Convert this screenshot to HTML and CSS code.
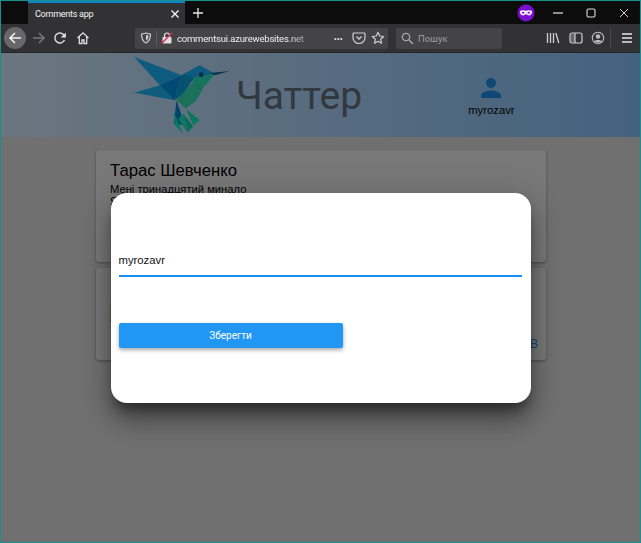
FILE: index.html
```html
<!DOCTYPE html>
<html lang="uk">
<head>
<meta charset="utf-8">
<title>Comments app</title>
<link rel="stylesheet" href="styles.css">
</head>
<body>
<div class="window">
  <div class="tabstrip">
    <div class="tab">
      <span class="tab-title">Comments app</span>
      <svg class="tab-close" width="10" height="10" viewBox="0 0 10 10"><path d="M1.500 1.500l7 7M8.500 1.500l-7 7" stroke="#f2f2f2" stroke-width="1.400" fill="none"/></svg>
    </div>
    <svg class="newtab" width="12" height="12" viewBox="0 0 12 12"><path d="M6 1v10M1 6h10" stroke="#e6e6e6" stroke-width="1.300" fill="none"/></svg>
    <div class="strip-fill"></div>
    <svg class="mask" width="18" height="18" viewBox="0 0 18 18"><circle cx="9" cy="9" r="8.500" fill="#7a0fd0"/><path d="M3 7c1.700-1 4.100-1 6-.2 1.900-.8 4.300-.8 6 .2.300 2.300-.7 4.500-2.800 4.500-1.400 0-2-1.300-3.200-1.300s-1.800 1.300-3.200 1.300C3.700 11.500 2.700 9.300 3 7z" fill="#f6efff"/><ellipse cx="6.200" cy="8.700" rx="1.300" ry=".9" fill="#7a0fd0"/><ellipse cx="11.800" cy="8.700" rx="1.300" ry=".9" fill="#7a0fd0"/></svg>
    <div class="winbtn"><svg width="10" height="10" viewBox="0 0 10 10"><path d="M0 5h10" stroke="#e8e8e8" stroke-width="1.200"/></svg></div>
    <div class="winbtn"><svg width="10" height="10" viewBox="0 0 10 10"><rect x="1" y="1" width="8" height="8" rx="1.500" stroke="#e0e0e0" stroke-width="1.100" fill="none"/></svg></div>
    <div class="winbtn"><svg width="10" height="10" viewBox="0 0 10 10"><path d="M1 1l8 8M9 1l-8 8" stroke="#d0d0d0" stroke-width="1" fill="none"/></svg></div>
  </div>

  <div class="toolbar">
    <div class="back"><svg width="14" height="14" viewBox="0 0 14 14"><path d="M13 7H2M7 2L2 7l5 5" stroke="#f0f0f0" stroke-width="1.600" fill="none"/></svg></div>
    <svg class="forward" width="14" height="14" viewBox="0 0 14 14"><path d="M1 7h11M7 2l5 5-5 5" stroke="#77777a" stroke-width="1.500" fill="none"/></svg>
    <svg class="reload" width="14" height="14" viewBox="0 0 14 14"><path d="M11.500 9a5 5 0 1 1-.6-5L12.500 6" stroke="#e0e0e0" stroke-width="1.400" fill="none"/><path d="M12.800 1.500v5h-5z" fill="#e0e0e0"/></svg>
    <svg class="home" width="14" height="14" viewBox="0 0 14 14"><path d="M1.500 7L7 1.800 12.500 7M3.300 6v6.500h2.700V9h2v3.500h2.700V6" stroke="#e0e0e0" stroke-width="1.300" fill="none"/></svg>
    <div class="urlbar">
      <svg class="shield" width="12" height="12" viewBox="0 0 12 12"><path d="M6 1l4.500 1.200c0 4-1 7-4.500 8.800C2.500 9.200 1.500 6.200 1.500 2.200z" stroke="#cfcfcf" stroke-width="1.200" fill="none"/><path d="M6 3l2.500.6c0 2.500-.6 4-2.500 5.200z" fill="#cfcfcf"/></svg>
      <span class="url-sep"></span>
      <svg class="lock" width="12" height="12" viewBox="0 0 12 12"><rect x="1.500" y="5" width="9" height="6.500" rx="1" fill="#e0e0e0"/><path d="M3.500 5V3.500a2.500 2.500 0 0 1 5 0V5" stroke="#e0e0e0" stroke-width="1.200" fill="none"/><path d="M.5 11.500L11 1" stroke="#e22850" stroke-width="1.400"/></svg>
      <span class="url-text">commentsui.azurewebsites.net</span>
      <span class="url-more">•••</span>
      <svg class="pocket" width="14" height="14" viewBox="0 0 14 14"><path d="M1.800 2h10.400a.8.8 0 0 1 .8.800V6.500a6 6 0 0 1-12 0V2.800a.8.8 0 0 1 .8-.8z" stroke="#cfcfcf" stroke-width="1.200" fill="none"/><path d="M4.500 5.500L7 8l2.500-2.500" stroke="#cfcfcf" stroke-width="1.300" fill="none"/></svg>
      <svg class="star" width="14" height="14" viewBox="0 0 14 14"><path d="M7 1.300l1.700 3.700 4 .5-3 2.700.8 4L7 10.200l-3.500 2 .8-4-3-2.700 4-.5z" stroke="#cfcfcf" stroke-width="1.200" fill="none" stroke-linejoin="round"/></svg>
    </div>
    <div class="searchbar">
      <svg width="13" height="13" viewBox="0 0 13 13"><circle cx="5" cy="5" r="3.700" stroke="#a8a8aa" stroke-width="1.300" fill="none"/><path d="M8 8l4 4" stroke="#a8a8aa" stroke-width="1.500"/></svg>
      <span class="search-text">Пошук</span>
    </div>
    <div class="tool-fill"></div>
    <svg class="library" width="14" height="14" viewBox="0 0 14 14"><path d="M1.500 2v10M4.500 2v10M7.500 2v10M9.800 2l3 10" stroke="#cfcfcf" stroke-width="1.300" fill="none"/></svg>
    <svg class="sidebar" width="14" height="14" viewBox="0 0 14 14"><rect x="1" y="2" width="12" height="10" rx="2" stroke="#cfcfcf" stroke-width="1.200" fill="none"/><path d="M6 2v10" stroke="#cfcfcf" stroke-width="1.200"/><rect x="2" y="3" width="4" height="8" fill="#cfcfcf" fill-opacity=".35"/></svg>
    <svg class="account" width="14" height="14" viewBox="0 0 14 14"><circle cx="7" cy="7" r="5.700" stroke="#bdbdbd" stroke-width="1.100" fill="none"/><circle cx="7" cy="5.500" r="2.200" fill="#bdbdbd"/><path d="M3 10.500c1-2 7-2 8 0-1.500 1.500-6.500 1.500-8 0z" fill="#bdbdbd"/></svg>
    <span class="tool-sep"></span>
    <svg class="menu" width="12" height="12" viewBox="0 0 12 12"><path d="M1 2h10M1 6h10M1 10h10" stroke="#e6e6e6" stroke-width="1.500"/></svg>
  </div>

  <div class="page">
    <header class="site-header">
      <svg class="logo" width="97" height="80" viewBox="43 20 290 240">
        <polygon points="43,20 185,75 120,105" fill="#1ab8ff"/>
        <polygon points="43,127 120,105 165,150" fill="#1fb8f8"/>
        <polygon points="120,105 185,75 165,150" fill="#0094e8"/>
        <polygon points="185,75 240,45 225,80 190,130 165,150" fill="#0ca0e0"/>
        <polygon points="240,45 285,70 222,82 190,72" fill="#1ab8ff"/>
        <polygon points="222,82 285,70 258,105 215,105" fill="#2ce8bc"/>
        <polygon points="215,100 255,105 230,150 198,175 170,150" fill="#38e0b4"/>
        <polygon points="170,150 195,225 162,220" fill="#0088d8"/>
        <polygon points="162,185 190,250 165,225" fill="#18f0c4"/>
        <polygon points="175,205 205,250 190,190" fill="#18f0c4"/>
        <polygon points="198,175 240,210 220,225" fill="#18f0c4"/>
        <polygon points="190,190 220,228 205,245" fill="#14d4ac"/>
        <polygon points="270,68 330,62 285,75" fill="#0f6898"/>
        <circle cx="244" cy="73" r="7" fill="#0a5c8c"/>
      </svg>
      <h1 class="brand">Чаттер</h1>
      <div class="user">
        <svg width="24" height="24" viewBox="0 0 24 24"><path d="M12 12a5 5 0 1 0 0-10 5 5 0 0 0 0 10zm0 2.500c-3.300 0-10 1.700-10 5V22h20v-2.500c0-3.300-6.700-5-10-5z" fill="#1f90ee"/></svg>
        <span class="user-name">myrozavr</span>
      </div>
    </header>
    <main class="feed">
      <article class="card card-first">
        <h2 class="card-title">Тарас Шевченко</h2>
        <p class="card-text">Мені тринадцятий минало<br>Я пас ягнята за селом</p>
      </article>
      <article class="card card-second">
        <span class="card-mark"></span>
        <a class="card-link">Коментарів</a>
      </article>
    </main>
    <div class="overlay">
      <form class="modal">
        <div class="field">myrozavr</div>
        <button class="save" type="button">Зберегти</button>
      </form>
    </div>
  </div>
</div>
</body>
</html>
```

FILE: styles.css
```css
* { box-sizing: border-box; }
html, body { margin: 0; height: 100%; }
body { font-family: "Liberation Sans", Arial, sans-serif; overflow: hidden; }

.window {
  width: 641px;
  height: 543px;
  border: 1px solid #17908f;
  display: flex;
  flex-direction: column;
  background: #0c0c0d;
}

.tabstrip {
  height: 23px;
  display: flex;
  align-items: center;
  background: #0c0c0d;
  flex: none;
}
.tab {
  margin-left: 27px;
  width: 157px;
  height: 23px;
  background: #323234;
  border-top: 2px solid #0a84c4;
  display: flex;
  align-items: center;
  padding: 0 5px 0 7px;
  justify-content: space-between;
}
.tab-title { font: 9px Roboto, sans-serif; letter-spacing: -.25px; color: #f2f2f2; }
.newtab { margin-left: 7px; }
.strip-fill { flex: 1; }
.mask { margin-right: 6px; }
.winbtn { width: 33px; display: flex; justify-content: center; }

.toolbar {
  height: 29px;
  background: #323234;
  border-bottom: 1px solid #262628;
  display: flex;
  align-items: center;
  flex: none;
  padding-left: 3px;
}
.back {
  width: 22px;
  height: 22px;
  border-radius: 50%;
  background: #68686b;
  display: flex;
  align-items: center;
  justify-content: center;
}
.forward { margin-left: 6px; }
.reload { margin-left: 7px; }
.home { margin-left: 9px; }
.urlbar {
  margin-left: 45px;
  width: 253px;
  height: 21px;
  background: #444447;
  border-radius: 2px;
  display: flex;
  align-items: center;
  padding: 0 3px 0 5px;
}
.url-sep { width: 1px; height: 15px; background: #5c5c5f; margin: 0 4px 0 4px; }
.url-text {
  margin-left: 4px;
  width: 130px;
  font: 9.500px Roboto, sans-serif;
  letter-spacing: -.2px;
  color: #f0f0f0;
  white-space: nowrap;
  overflow: hidden;
  -webkit-mask-image: linear-gradient(90deg, #000 85%, rgba(0,0,0,.35) 100%);
  mask-image: linear-gradient(90deg, #000 85%, rgba(0,0,0,.35) 100%);
}
.url-more { margin-left: 27px; font-size: 7px; letter-spacing: .5px; color: #dedede; }
.pocket { margin-left: 9px; }
.star { margin-left: 5px; }
.searchbar {
  margin-left: 8px;
  width: 106px;
  height: 21px;
  background: #444447;
  border-radius: 2px;
  display: flex;
  align-items: center;
  padding-left: 5px;
}
.search-text { margin-left: 4px; font: 9.500px Roboto, sans-serif; color: #9c9c9e; }
.tool-fill { flex: 1; }
.sidebar { margin-left: 9px; }
.account { margin-left: 8px; }
.tool-sep { width: 1px; height: 20px; background: #4a4a4d; margin-left: 5px; }
.menu { margin: 0 7px 0 10px; }

.page {
  position: relative;
  flex: 1;
  min-height: 0;
  background: #e0e0e0;
  overflow: hidden;
}

.site-header {
  height: 84px;
  background: linear-gradient(90deg, #d6ecff 0%, #88c4fe 100%);
  display: flex;
  align-items: flex-start;
  padding-left: 133px;
}
.logo { margin-top: 4px; }
.brand {
  margin: 18px 0 0 5px;
  font: 400 39px/50px Roboto, sans-serif;
  color: #66707e;
}
.user {
  margin: 23px 0 0 106px;
  display: flex;
  flex-direction: column;
  align-items: center;
  font-size: 11.300px;
  color: #000;
}
.user-name { margin-top: 4px; }

.feed {
  padding: 13px 94px 0 95px;
  display: flex;
  flex-direction: column;
  gap: 6px;
}
.card {
  background: #f0f0f0;
  border-radius: 3px;
  box-shadow: 0 1px 3px rgba(0,0,0,.35);
  padding: 11px 8px 0 14px;
  display: flex;
  flex-direction: column;
}
.card-first { height: 112px; }
.card-second { height: 92px; align-items: flex-start; }
.card-title { margin: 0; font: 400 16.700px/20px "Liberation Sans", sans-serif; color: #000; }
.card-text { margin: 3px 0 0; font-size: 11.200px; line-height: 11.500px; color: #000; }
.card-mark { flex: none; margin-top: 23px; width: 4px; height: 20px; background: linear-gradient(#f0c880 0%, #f0c880 85%, #b06010 100%); }
.card-link { margin-top: 15px; align-self: flex-end; font-size: 12px; color: #2196f3; text-transform: uppercase; }

.overlay {
  position: absolute;
  inset: 0;
  background: rgba(0,0,0,.5);
  display: flex;
  align-items: center;
  justify-content: center;
}
.modal {
  width: 420px;
  height: 210px;
  background: #fff;
  border-radius: 16px;
  padding: 56px 8px 0;
  box-shadow: 0 10px 12px -4px rgba(0,0,0,.4), 0 20px 26px -2px rgba(0,0,0,.3), 0 6px 30px 5px rgba(0,0,0,.15);
}
.field {
  height: 28px;
  margin-right: 1px;
  border-bottom: 2px solid #1a90f5;
  font-size: 11.300px;
  line-height: 22px;
  color: #111;
}
.save {
  display: block;
  margin-top: 46px;
  width: 224px;
  height: 25px;
  border: 0;
  border-radius: 2px;
  background: #2196f3;
  color: #fff;
  font: 10px Roboto, sans-serif;
  box-shadow: 0 2px 4px rgba(0,0,0,.35);
}
```
